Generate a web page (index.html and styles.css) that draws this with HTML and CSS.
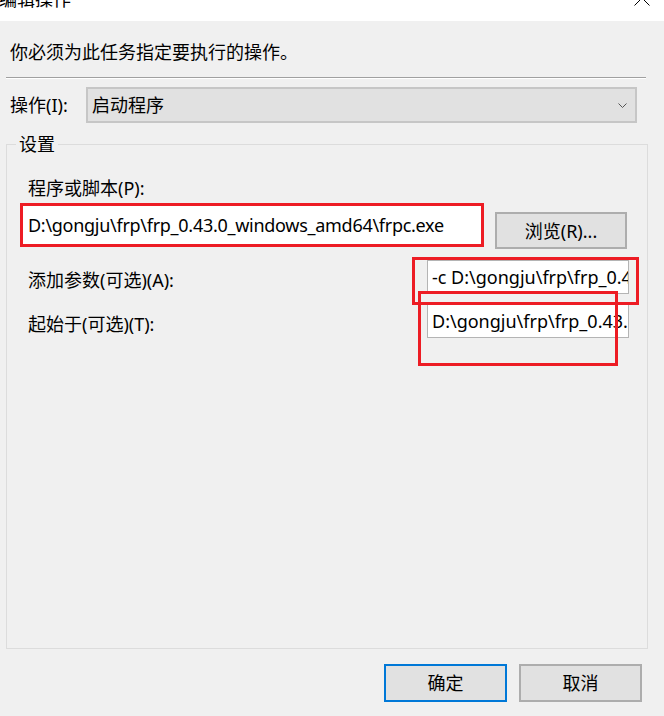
FILE: index.html
```html
<!DOCTYPE html>
<html lang="zh-CN">
<head>
<meta charset="utf-8">
<title>编辑操作</title>
<link rel="stylesheet" href="styles.css">
</head>
<body>
<div class="window">
  <div class="titlebar">
    <span class="title">编辑操作</span>
    <svg class="close" viewBox="0 0 16 16" width="16" height="16"><path d="M0.5 0.5 L15.5 15.5 M15.5 0.5 L0.5 15.5" stroke="#000" stroke-width="1" fill="none"/></svg>
  </div>
  <div class="content">
    <p class="intro">你必须为此任务指定要执行的操作。</p>
    <div class="sep"></div>
    <div class="action-row">
      <span class="action-label">操作(I):</span>
      <div class="combo">
        <span>启动程序</span>
        <svg class="chevron" viewBox="0 0 9 5" width="9" height="5"><path d="M0.5 0.5 L4.5 4.5 L8.5 0.5" stroke="#555" stroke-width="1" fill="none"/></svg>
      </div>
    </div>
    <fieldset class="settings">
      <legend class="legend">设置</legend>
      <div class="field-label">程序或脚本(P):</div>
      <div class="program-row">
        <div class="textbox program">D:\gongju\frp\frp_0.43.0_windows_amd64\frpc.exe</div>
        <button class="btn browse">浏览(R)...</button>
      </div>
      <div class="opt-row">
        <span class="opt-label">添加参数(可选)(A):</span>
        <div class="textbox short">-c D:\gongju\frp\frp_0.43.0_windows_amd64\frpc.ini</div>
      </div>
      <div class="opt-row second">
        <span class="opt-label">起始于(可选)(T):</span>
        <div class="textbox short">D:\gongju\frp\frp_0.43.0_windows_amd64</div>
      </div>
    </fieldset>
    <div class="footer">
      <button class="btn primary">确定</button>
      <button class="btn">取消</button>
    </div>
  </div>
  <div class="mark mark-args"></div>
  <div class="mark mark-start"></div>
</div>
</body>
</html>
```
FILE: styles.css
```css
html, body {
  margin: 0;
  padding: 0;
  background: #f0f0f0;
}
body {
  font-family: "Noto Sans", "Noto Sans CJK SC", sans-serif;
  font-size: 18px;
  line-height: 24px;
  color: #000;
}
.window {
  position: relative;
  width: 664px;
  height: 716px;
  overflow: hidden;
  background: #f0f0f0;
}
.titlebar {
  height: 21px;
  background: #fff;
  display: flex;
  justify-content: space-between;
  align-items: flex-start;
  overflow: hidden;
}
.title {
  margin-top: -13px;
  margin-left: -1px;
}
.close {
  margin-top: -10px;
  margin-right: 14px;
}
.content {
  padding-top: 19px;
}
.intro {
  margin: 0 0 0 10px;
}
.sep {
  margin: 13px 0 0 6px;
  width: 640px;
  border-top: 1px solid #a0a0a0;
  border-bottom: 1px solid #fff;
}
.action-row {
  display: flex;
  align-items: center;
  margin-top: 8px;
  padding-left: 10px;
}
.action-label {
  width: 76px;
}
.combo {
  width: 551px;
  height: 36px;
  box-sizing: border-box;
  border: 2px solid #c6c6c6;
  background: #e1e1e1;
  display: flex;
  align-items: center;
  justify-content: space-between;
  padding: 0 8px 0 4px;
}
.settings {
  margin: 9px 0 0 6px;
  width: 642px;
  height: 517px;
  box-sizing: border-box;
  border: 1px solid #dcdcdc;
  padding: 20px 18px 0 13px;
  min-width: 0;
}
.legend {
  margin-left: -4px;
  padding: 0 3px;
}
.field-label {
  padding-left: 8px;
}
.program-row {
  display: flex;
  align-items: flex-start;
  margin-top: 3px;
}
.textbox {
  background: #fff;
  border: 1px solid #b4b4b4;
  box-sizing: border-box;
  white-space: nowrap;
  overflow: hidden;
  padding-left: 4px;
  display: flex;
  align-items: center;
}
.program {
  width: 464px;
  height: 44px;
  border: 3px solid #ed1c24;
  padding-left: 5px;
  letter-spacing: -0.28px;
}
.btn {
  font: inherit;
  color: #000;
  background: #e1e1e1;
  border: 2px solid #adadad;
  box-sizing: border-box;
  padding: 0;
  margin: 0;
}
.browse {
  margin-left: 11px;
  margin-top: 9px;
  width: 132px;
  height: 37px;
}
.opt-row {
  display: flex;
  justify-content: space-between;
  align-items: center;
  margin-top: 11px;
}
.opt-row.second {
  margin-top: 10px;
}
.opt-label {
  padding-left: 8px;
  padding-top: 5px;
}
.short {
  width: 202px;
  height: 34px;
}
.footer {
  display: flex;
  justify-content: flex-end;
  gap: 12px;
  padding-right: 22px;
  margin-top: 15px;
}
.footer .btn {
  width: 123px;
  height: 38px;
}
.primary {
  border-color: #0078d7;
}
.mark {
  position: absolute;
  border: 3px solid #ed1c24;
  box-sizing: border-box;
}
.mark-args {
  left: 412px;
  top: 257px;
  width: 227px;
  height: 48px;
}
.mark-start {
  left: 418px;
  top: 291px;
  width: 200px;
  height: 75px;
}
```
